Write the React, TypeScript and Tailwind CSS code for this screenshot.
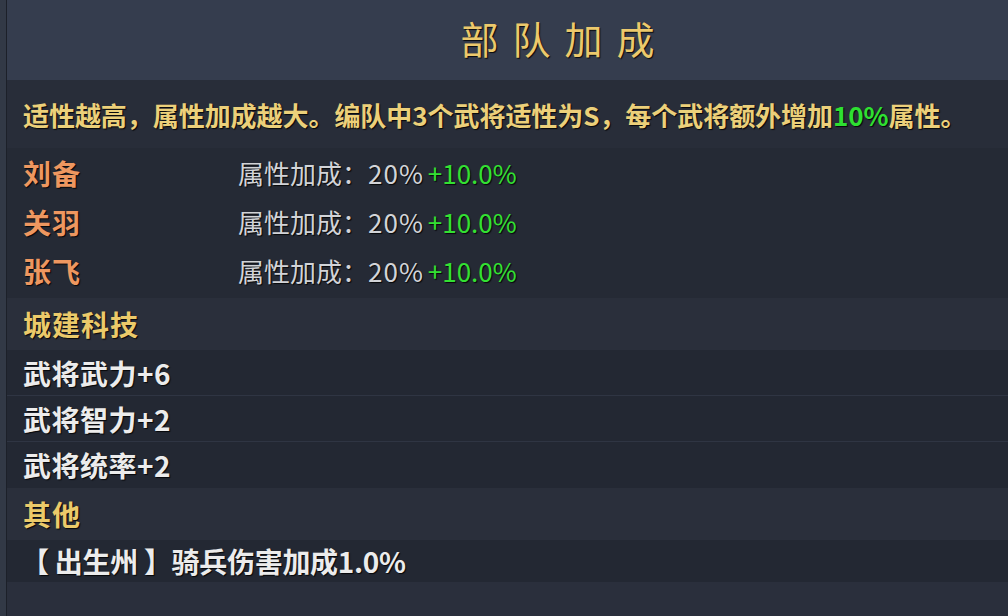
import React from "react";

const CJK = { fontFamily: '"Noto Sans CJK SC", "Noto Sans", sans-serif' };

const generals = ["刘备", "关羽", "张飞"];
const techs = ["武将武力+6", "武将智力+2", "武将统率+2"];

export default function App() {
  return (
    <div
      className="w-[1008px] h-[616px] overflow-hidden flex bg-[#2a2f3c] [text-shadow:1px_1px_1px_rgba(0,0,0,0.85)]"
      style={CJK}
    >
      <div className="w-[7px] shrink-0 bg-[#323946] border-r border-[#1c2029]" />
      <div className="flex-1 flex flex-col">
        <div className="h-[80px] shrink-0 bg-[#353d4e] flex items-center justify-center pl-[114px]">
          <span className="text-[38px] tracking-[14px] text-[#ecc96c] leading-none pb-[4px]">部队加成</span>
        </div>
        <div className="h-[68px] shrink-0 bg-[#282d39] flex items-center pl-[16px] text-[26px] font-bold text-[#ecd07a] tracking-[-0.05px] whitespace-nowrap">
          <span>
            适性越高，属性加成越大。编队中3个武将适性为S，每个武将额外增加
            <span className="text-[#2ee032]">10%</span>属性。
          </span>
        </div>
        <div className="shrink-0 bg-[#252a35] pb-[3px]">
          {generals.map((g) => (
            <div key={g} className="h-[49px] flex items-center pl-[16px]">
              <span className="w-[215px] text-[28px] font-bold text-[#ee9760] tracking-[1px]">{g}</span>
              <span className="text-[26px] text-[#d2d4d8]">
                属性加成：<span className="tracking-[1px]">20%</span>
                <span className="text-[#33e033] ml-[4px]">+10.0%</span>
              </span>
            </div>
          ))}
        </div>
        <div className="h-[52px] shrink-0 bg-[#2a2f3b] flex items-center pl-[16px] text-[28px] font-bold text-[#ebca6a] tracking-[1px]">
          城建科技
        </div>
        {techs.map((t, i) => (
          <div
            key={t}
            className={
              "h-[46px] shrink-0 bg-[#232833] flex items-center pl-[16px] text-[28px] font-bold text-[#ececec] tracking-[0.5px] " +
              (i < 2 ? "border-b border-[#2f3543]" : "")
            }
          >
            {t}
          </div>
        ))}
        <div className="h-[52px] shrink-0 bg-[#2a2f3b] flex items-center pl-[16px] text-[28px] font-bold text-[#ebca6a] tracking-[1px]">
          其他
        </div>
        <div className="h-[42px] shrink-0 bg-[#232833] flex items-center pl-[14px] text-[28px] font-bold text-[#ececec] whitespace-nowrap tracking-[-0.3px]">
          【 出生州 】骑兵伤害加成1.0%
        </div>
        <div className="flex-1 bg-[#2a2f3c]" />
      </div>
    </div>
  );
}
